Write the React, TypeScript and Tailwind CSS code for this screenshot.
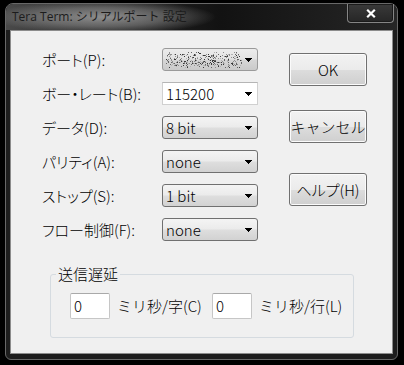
const LABELS = [
  "ポート(P):",
  "ボー・レート(B):",
  "データ(D):",
  "パリティ(A):",
  "ストップ(S):",
  "フロー制御(F):",
];

// redacted port name: deterministic speckle
const NOISE = (() => {
  let s = 11;
  const rnd = () => {
    s = (Math.imul(s, 1664525) + 1013904223) >>> 0;
    return s / 4294967296;
  };
  const shades = ["#3a3a3a", "#666666", "#8f8f8f", "#b4b4b4"];
  const dots: { x: number; y: number; c: string }[] = [];
  for (let y = 0; y < 16; y++) {
    for (let x = 0; x < 76; x++) {
      const inBand = y > 1 && y < 14;
      const gap = x % 13 === 12;
      const p = inBand && !gap ? 0.34 : 0.08;
      if (rnd() < p) dots.push({ x, y, c: shades[Math.floor(rnd() * shades.length)] });
    }
  }
  return dots;
})();

function Arrow() {
  return (
    <svg width="7" height="4" viewBox="0 0 7 4" shapeRendering="crispEdges">
      <path d="M0 0h7v1h-1v1h-1v1h-1v1h-1v-1h-1v-1h-1v-1h-1z" fill="#000" />
    </svg>
  );
}

function Select({ children }: { children: React.ReactNode }) {
  return (
    <div className="flex h-[23px] w-[96px] items-center justify-between rounded-[3px] border border-[#707070] bg-[linear-gradient(#f4f4f4_0%,#ebebeb_48%,#dedede_52%,#d2d2d2_100%)] pl-[3px] pr-[5px]">
      {children}
      <Arrow />
    </div>
  );
}

function Button({ children, className = "" }: { children: React.ReactNode; className?: string }) {
  return (
    <div
      className={
        "flex h-[33px] w-[78px] items-center justify-center rounded-[3px] border border-[#707070] bg-[linear-gradient(#f2f2f2_0%,#ebebeb_50%,#dddddd_50%,#cfcfcf_100%)] shadow-[inset_0_0_0_1px_#fbfbfb] " +
        className
      }
    >
      {children}
    </div>
  );
}

function Field() {
  return (
    <div className="flex h-[26px] w-[40px] items-start rounded-[2px] border border-[#c6c6c6] border-t-[#a9a9a9] bg-white pl-[3px] pt-[4px]">
      0
    </div>
  );
}

export default function App() {
  return (
    <div className="h-[365px] w-[404px] overflow-hidden bg-black pl-[5px] pt-[3px]">
      <div className="flex h-[357px] w-[393px] flex-col rounded-t-[8px] rounded-b-[6px] border border-[#686868] bg-[#1d1d1d]">
        {/* title bar */}
        <div className="flex h-[26px] items-start justify-between rounded-t-[7px] bg-[radial-gradient(ellipse_112px_17px_at_98px_13px,rgba(205,205,205,0.62)_0%,rgba(205,205,205,0.35)_55%,rgba(205,205,205,0)_100%),linear-gradient(90deg,#4a4a4a_0%,#2c2c2c_18%,#121212_55%,#262626_100%)]">
          <span className="pl-[6px] pt-[5px] font-['Open_Sans','Noto_Sans_CJK_JP',sans-serif] text-[12px] leading-[16px] text-[#1c1c1c]">
            Tera Term: シリアルポート 設定
          </span>
          <div className="mr-[3px] flex h-[19px] w-[47px] items-center justify-center rounded-b-[4px] border border-t-0 border-[#858585] bg-[linear-gradient(#3a3a3a,#262626)] shadow-[inset_0_0_0_1px_#1a1a1a]">
            <svg width="10" height="9" viewBox="0 0 10 9">
              <path d="M1.2 0.8L8.8 8.2M8.8 0.8L1.2 8.2" stroke="#fff" strokeWidth="2.2" />
            </svg>
          </div>
        </div>

        {/* client area */}
        <div className="mx-[4px] h-[324px] border border-[#8c8c8c] bg-[#f0f0f0] font-['Noto_Sans_CJK_JP',sans-serif] text-[15px] font-light leading-[16px] text-black [font-feature-settings:'palt']">
          <div className="flex pl-[31px]">
            <div className="flex flex-col gap-[11px] pt-[17px]">
              {LABELS.map((label, i) => (
                <div key={label} className="flex h-[23px] items-center">
                  <span className="w-[120px]">{label}</span>
                  {i === 0 && (
                    <div className="flex h-[23px] w-[96px] items-center justify-between rounded-[3px] border border-[#9a9a9a] bg-[linear-gradient(#ececec_0%,#e2e2e2_48%,#d6d6d6_52%,#cacaca_100%)] pl-[3px] pr-[5px]">
                      <svg width="76" height="16" viewBox="0 0 76 16" shapeRendering="crispEdges">
                        {NOISE.map((d, k) => (
                          <rect key={k} x={d.x} y={d.y} width="1" height="1" fill={d.c} />
                        ))}
                      </svg>
                      <Arrow />
                    </div>
                  )}
                  {i === 1 && (
                    <div className="flex h-[23px] w-[96px] items-center justify-between border border-[#d0d0d0] border-t-[#b5b5b5] bg-white pl-[3px] pr-[5px]">
                      <span>115200</span>
                      <Arrow />
                    </div>
                  )}
                  {i === 2 && <Select>8 bit</Select>}
                  {i === 3 && <Select>none</Select>}
                  {i === 4 && <Select>1 bit</Select>}
                  {i === 5 && <Select>none</Select>}
                </div>
              ))}
            </div>
            <div className="ml-[31px] flex flex-col pt-[22px]">
              <Button>OK</Button>
              <Button className="mt-[24px] [font-feature-settings:normal]">キャンセル</Button>
              <Button className="mt-[30px]">ヘルプ(H)</Button>
            </div>
          </div>

          <fieldset className="ml-[39px] mt-[25px] w-[304px] rounded-[3px] border border-[#d5dbe0]">
            <legend className="ml-[5px] px-[2px]">送信遅延</legend>
            <div className="flex items-center pb-[18px] pl-[19px] pt-[11px] [font-feature-settings:normal]">
              <Field />
              <span className="ml-[7px] w-[95px]">ミリ秒/字(C)</span>
              <Field />
              <span className="ml-[7px]">ミリ秒/行(L)</span>
            </div>
          </fieldset>
        </div>
      </div>
    </div>
  );
}
